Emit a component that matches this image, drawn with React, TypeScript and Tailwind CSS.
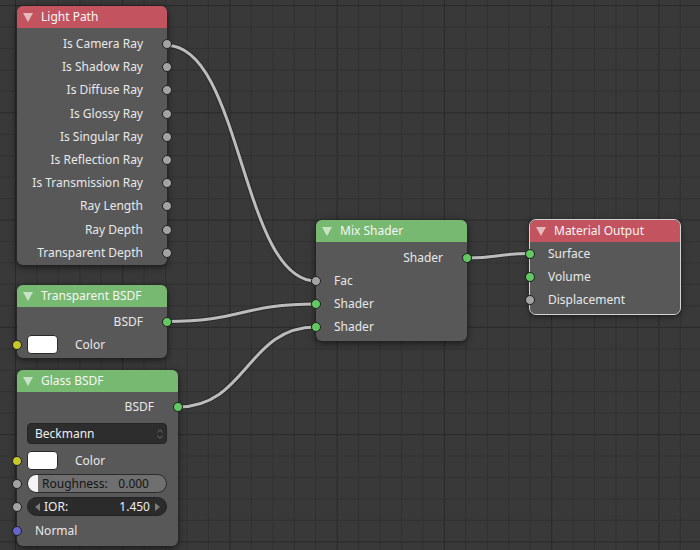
import React from "react";

type Kind = "gray" | "green" | "yellow" | "blue";

const socketFill: Record<Kind, string> = {
  gray: "bg-[#a3a3a3]",
  green: "bg-[#62c862]",
  yellow: "bg-[#c8c82a]",
  blue: "bg-[#6464cc]",
};

const Socket = ({ kind, side }: { kind: Kind; side: "in" | "out" }) => (
  <span
    className={`absolute top-1/2 -translate-y-1/2 w-[10px] h-[10px] rounded-full border border-[#1e1e1e] ${socketFill[kind]} ${
      side === "in" ? "left-[-5px]" : "right-[-5px]"
    }`}
  />
);

const OutRow = ({ label, kind }: { label: string; kind: Kind }) => (
  <div className="relative h-[23px] flex items-center justify-end pr-[24px]">
    <span>{label}</span>
    <Socket kind={kind} side="out" />
  </div>
);

const InRow = ({ label, kind }: { label: string; kind: Kind }) => (
  <div className="relative h-[23px] flex items-center pl-[18px]">
    <span>{label}</span>
    <Socket kind={kind} side="in" />
  </div>
);

const Node = ({
  title,
  tone,
  className,
  children,
}: {
  title: string;
  tone: "red" | "green";
  className: string;
  children: React.ReactNode;
}) => (
  <div
    className={`absolute rounded-[6px] bg-[#585858] text-[12px] text-[#e8e8e8] shadow-[0_2px_7px_rgba(0,0,0,0.6)] ${className}`}
  >
    <div
      className={`h-[22px] rounded-t-[6px] flex items-center ${
        tone === "red" ? "bg-[#c2535f]" : "bg-[#77b970]"
      }`}
    >
      <svg width="10" height="9" viewBox="0 0 10 9" className="ml-[6px]">
        <path d="M0 0 L10 0 L5 9 Z" fill="rgba(255,255,255,0.6)" />
      </svg>
      <span className="ml-[8px] text-[#f6f6f6]">{title}</span>
    </div>
    {children}
  </div>
);

const Grid = () => {
  const step = 21.45;
  const lines: React.ReactNode[] = [];
  for (let k = 0; k < 36; k++) {
    const x = -6.05 + k * step;
    if (x < 0 || x > 700) continue;
    lines.push(
      <line key={`v${k}`} x1={x} y1={0} x2={x} y2={550} stroke={k % 5 === 1 ? "#2a2a2a" : "#323232"} strokeWidth={1} />
    );
  }
  for (let k = 0; k < 28; k++) {
    const y = 5.55 + k * step;
    if (y > 550) continue;
    lines.push(
      <line key={`h${k}`} x1={0} y1={y} x2={700} y2={y} stroke={k % 5 === 0 ? "#2a2a2a" : "#323232"} strokeWidth={1} />
    );
  }
  return (
    <svg className="absolute inset-0" width="700" height="550">
      {lines}
    </svg>
  );
};

const curve = (x1: number, y1: number, x2: number, y2: number) => {
  const d = Math.abs(x2 - x1) * 0.5;
  return `M${x1} ${y1} C${x1 + d} ${y1} ${x2 - d} ${y2} ${x2} ${y2}`;
};

const links = [
  curve(167, 45.5, 316, 281),
  curve(167, 321.5, 316, 304),
  curve(178, 407, 316, 327),
  curve(467, 258, 530, 253.5),
];

const Wires = () => (
  <svg className="absolute inset-0" width="700" height="550" fill="none">
    {links.map((d, i) => (
      <g key={i}>
        <path d={d} stroke="#262626" strokeWidth={5} strokeOpacity={0.8} />
        <path d={d} stroke="#bcbcbc" strokeWidth={3} />
      </g>
    ))}
  </svg>
);

const lightPathOutputs = [
  "Is Camera Ray",
  "Is Shadow Ray",
  "Is Diffuse Ray",
  "Is Glossy Ray",
  "Is Singular Ray",
  "Is Reflection Ray",
  "Is Transmission Ray",
  "Ray Length",
  "Ray Depth",
  "Transparent Depth",
];

const Swatch = () => (
  <span className="w-[31px] h-[19px] rounded-[4px] bg-white border border-[#2a2a2a]" />
);

export default function App() {
  return (
    <div className="relative w-[700px] h-[550px] overflow-hidden bg-[#393939] font-['Noto_Sans',sans-serif]">
      <Grid />
      <Wires />

      <Node title="Light Path" tone="red" className="left-[17px] top-[6px] w-[150px] h-[259px]">
        <div className="pt-[4.5px]">
          {lightPathOutputs.map((l) => (
            <div key={l} className="relative h-[23.2px] flex items-center justify-end pr-[24px]">
              <span>{l}</span>
              <Socket kind="gray" side="out" />
            </div>
          ))}
        </div>
      </Node>

      <Node title="Transparent BSDF" tone="green" className="left-[17px] top-[285px] w-[150px]">
        <div className="pt-[3px] pb-[2px]">
          <OutRow label="BSDF" kind="green" />
          <div className="relative h-[23px] flex items-center pl-[10px] gap-[17px]">
            <Swatch />
            <span>Color</span>
            <Socket kind="yellow" side="in" />
          </div>
        </div>
      </Node>

      <Node title="Glass BSDF" tone="green" className="left-[17px] top-[370px] w-[161px]">
        <div className="pt-[3.5px] pb-[3px] flex flex-col">
          <OutRow label="BSDF" kind="green" />
          <div className="mt-[4.5px] mx-[10px] mr-[11px] h-[21px] rounded-[4px] bg-[#2d2d2d] border border-[#252525] flex items-center justify-between pl-[7px] pr-[3px] text-[#eeeeee]">
            <span>Beckmann</span>
            <svg width="6" height="12" viewBox="0 0 6 12">
              <path d="M0.5 4.5 L3 1.5 L5.5 4.5" stroke="#6a6a6a" strokeWidth="1" fill="none" />
              <path d="M0.5 7.5 L3 10.5 L5.5 7.5" stroke="#6a6a6a" strokeWidth="1" fill="none" />
            </svg>
          </div>
          <div className="relative mt-[7px] h-[19px] flex items-center pl-[10px] gap-[17px]">
            <Swatch />
            <span>Color</span>
            <Socket kind="yellow" side="in" />
          </div>
          <div className="relative mt-[4px] h-[19px]">
            <Socket kind="gray" side="in" />
            <div className="relative ml-[10px] mr-[11px] h-full rounded-full bg-[#6f6f6f] border border-[#2b2b2b] overflow-hidden flex items-center justify-between pl-[14px] pr-[17px] text-[#161616]">
              <span className="absolute left-0 top-0 bottom-0 w-[10px] bg-[#f4f4f4]" />
              <span className="relative">Roughness:</span>
              <span className="relative">0.000</span>
            </div>
          </div>
          <div className="relative mt-[4px] h-[19px]">
            <Socket kind="gray" side="in" />
            <div className="ml-[10px] mr-[11px] h-full rounded-full bg-[#2b2b2b] border border-[#232323] flex items-center pl-[7px] pr-[6px] text-[#eeeeee]">
              <svg width="5" height="8" viewBox="0 0 5 8">
                <path d="M5 0 L0 4 L5 8 Z" fill="#7c7c7c" />
              </svg>
              <span className="ml-[4px]">IOR:</span>
              <span className="ml-auto mr-[5px]">1.450</span>
              <svg width="5" height="8" viewBox="0 0 5 8">
                <path d="M0 0 L5 4 L0 8 Z" fill="#7c7c7c" />
              </svg>
            </div>
          </div>
          <div className="mt-[3.5px]">
            <InRow label="Normal" kind="blue" />
          </div>
        </div>
      </Node>

      <Node title="Mix Shader" tone="green" className="left-[316px] top-[220px] w-[151px]">
        <div className="pt-[4.5px] pb-[2px]">
          <OutRow label="Shader" kind="green" />
          <InRow label="Fac" kind="gray" />
          <InRow label="Shader" kind="green" />
          <InRow label="Shader" kind="green" />
        </div>
      </Node>

      <Node title="Material Output" tone="red" className="left-[530px] top-[220px] w-[150px] outline outline-1 outline-[#d2d2d2]">
        <div className="pb-[3px]">
          <InRow label="Surface" kind="green" />
          <InRow label="Volume" kind="green" />
          <InRow label="Displacement" kind="gray" />
        </div>
      </Node>
    </div>
  );
}
